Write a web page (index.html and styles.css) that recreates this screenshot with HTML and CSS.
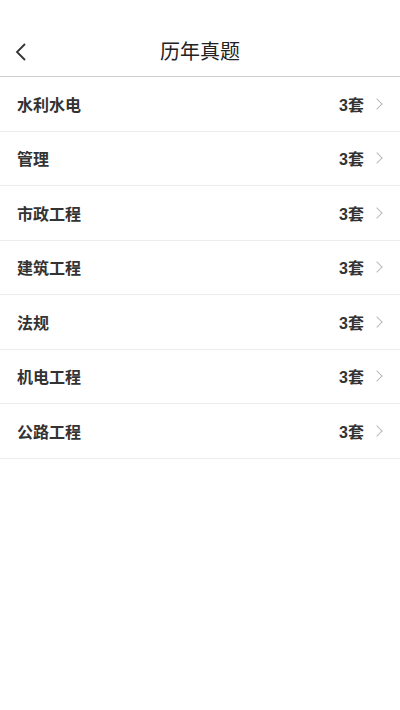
FILE: index.html
```html
<!DOCTYPE html>
<html lang="zh-CN">
<head>
  <meta charset="UTF-8" />
  <meta name="viewport" content="width=device-width, initial-scale=1.0" />
  <title>历年真题</title>
  <link rel="stylesheet" href="styles.css">
</head>
<body>
  <header class="nav">
    <span class="back">
      <svg width="14" height="20" viewBox="0 0 14 20"><path d="M11 2 L3 10 L11 18" fill="none" stroke="#333" stroke-width="1.8"/></svg>
    </span>
    <h1>历年真题</h1>
  </header>

  <ul class="list">
    <li><span class="name">水利水电</span><span class="count">3套</span><span class="arrow"></span></li>
    <li><span class="name">管理</span><span class="count">3套</span><span class="arrow"></span></li>
    <li><span class="name">市政工程</span><span class="count">3套</span><span class="arrow"></span></li>
    <li><span class="name">建筑工程</span><span class="count">3套</span><span class="arrow"></span></li>
    <li><span class="name">法规</span><span class="count">3套</span><span class="arrow"></span></li>
    <li><span class="name">机电工程</span><span class="count">3套</span><span class="arrow"></span></li>
    <li><span class="name">公路工程</span><span class="count">3套</span><span class="arrow"></span></li>
  </ul>
</body>
</html>
```

FILE: styles.css
```css
body {
  margin: 0;
  font-family: "Liberation Sans", "Noto Sans CJK SC", sans-serif;
  background: #fff;
  color: #333;
}

.nav {
  height: 77px;
  border-bottom: 1px solid #cfcfcf;
  display: flex;
  align-items: flex-end;
  justify-content: center;
  position: relative;
  box-sizing: border-box;
  padding-bottom: 10px;
}

.nav h1 {
  margin: 0;
  font-size: 20px;
  font-weight: 400;
  color: #222;
  line-height: 28px;
}

.nav .back {
  position: absolute;
  left: 14px;
  bottom: 14px;
  display: flex;
}

.list {
  list-style: none;
  margin: 0;
  padding: 0;
}

.list li {
  height: 53.5px;
  border-bottom: 1px solid #ececec;
  display: flex;
  align-items: center;
  padding: 0 17px 0 17px;
}

.list .name {
  flex: 1;
  font-size: 16px;
  font-weight: 700;
  color: #333;
}

.list .count {
  font-size: 16px;
  font-weight: 700;
  color: #333;
}

.list .arrow {
  width: 7px;
  height: 7px;
  border-top: 1.3px solid #bbb;
  border-right: 1.3px solid #bbb;
  transform: rotate(45deg);
  margin-left: 9px;
  margin-right: 2px;
}
```
